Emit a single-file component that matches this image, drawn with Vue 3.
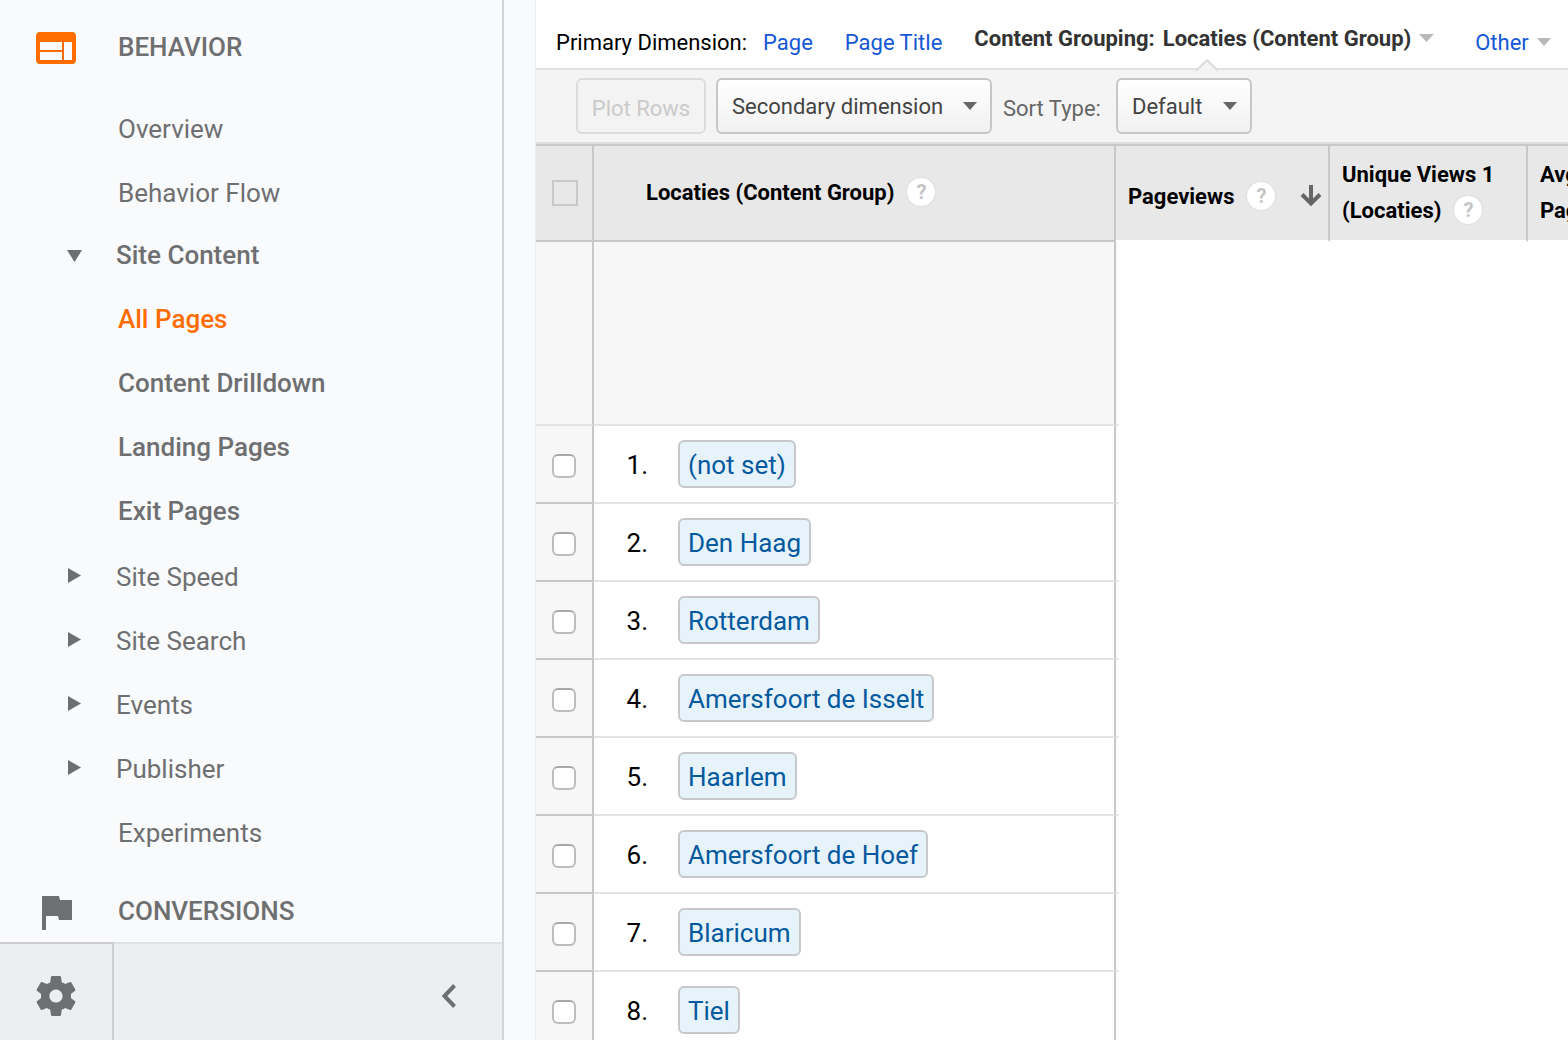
<script setup>
import { ref } from 'vue'

const before = ['Overview', 'Behavior Flow']
const siteContent = ['All Pages', 'Content Drilldown', 'Landing Pages', 'Exit Pages']
const collapsed = ['Site Speed', 'Site Search', 'Events', 'Publisher']
const locations = [
  '(not set)',
  'Den Haag',
  'Rotterdam',
  'Amersfoort de Isselt',
  'Haarlem',
  'Amersfoort de Hoef',
  'Blaricum',
  'Tiel',
]
const active = ref('All Pages')
const selected = ref([])
</script>

<template>
  <div class="app">
    <aside class="sidebar">
      <nav class="nav" aria-label="Reports">
        <a href="#behavior" class="section first">
          <svg class="section-icon" width="40" height="34" viewBox="0 0 40 34" aria-hidden="true">
            <path
              fill="#ff6d00"
              fill-rule="evenodd"
              d="M4 2h32a4 4 0 0 1 4 4v24a4 4 0 0 1-4 4H4a4 4 0 0 1-4-4V6a4 4 0 0 1 4-4zM4 12v8h22v-8zM4 22v8h22v-8zM28 12v18h8V12z"
            />
          </svg>
          BEHAVIOR
        </a>

        <a v-for="item in before" :key="item" href="#" class="item">{{ item }}</a>

        <a href="#site-content" class="item group open">
          <svg class="marker" width="16" height="14" viewBox="0 0 16 14" aria-hidden="true">
            <path fill="#6e6f71" d="M1 2h15L8.500 14z" />
          </svg>
          Site Content
        </a>
        <div class="children">
          <a
            v-for="item in siteContent"
            :key="item"
            href="#"
            class="item strong"
            :class="{ active: item === active }"
            @click.prevent="active = item"
          >{{ item }}</a>
        </div>

        <a v-for="item in collapsed" :key="item" href="#" class="item group">
          <svg class="marker" width="16" height="18" viewBox="0 0 16 18" aria-hidden="true">
            <path fill="#6e6f71" d="M2 0v15l13-7.500z" />
          </svg>
          {{ item }}
        </a>
        <a href="#" class="item">Experiments</a>

        <a href="#conversions" class="section last">
          <svg class="section-icon" width="40" height="38" viewBox="0 0 40 38" aria-hidden="true">
            <path fill="#6e6f71" d="M6 4h17l1 4h12v20H23l-1-4H10v14H6z" />
          </svg>
          CONVERSIONS
        </a>
      </nav>

      <div class="footer">
        <button type="button" class="settings" aria-label="Admin">
          <svg width="48" height="48" viewBox="0 0 24 24" aria-hidden="true">
            <path
              fill="#6e6f71"
              d="M19.430 12.980c.04-.32.07-.64.07-.98s-.03-.66-.07-.98l2.110-1.650c.19-.15.24-.42.12-.64l-2-3.460c-.12-.22-.39-.3-.61-.22l-2.490 1c-.52-.4-1.080-.73-1.690-.98l-.38-2.650C14.460 2.180 14.250 2 14 2h-4c-.25 0-.46.18-.49.42l-.38 2.650c-.61.25-1.170.59-1.690.98l-2.490-1c-.23-.09-.49 0-.61.22l-2 3.460c-.13.22-.07.49.12.64l2.110 1.650c-.04.32-.07.65-.07.98s.03.66.07.98l-2.110 1.650c-.19.15-.24.42-.12.64l2 3.460c.12.22.39.3.61.22l2.490-1c.52.4 1.080.73 1.690.98l.38 2.650c.03.24.24.42.49.42h4c.25 0 .46-.18.49-.42l.38-2.650c.61-.25 1.170-.59 1.690-.98l2.490 1c.23.09.49 0 .61-.22l2-3.460c.12-.22.07-.49-.12-.64l-2.110-1.650zM12 15.300c-1.820 0-3.300-1.480-3.300-3.300s1.480-3.300 3.300-3.300 3.300 1.480 3.300 3.300-1.480 3.300-3.300 3.300z"
            />
          </svg>
        </button>
        <button type="button" class="collapse" aria-label="Collapse menu">
          <svg width="16" height="24" viewBox="0 0 16 24" aria-hidden="true">
            <path fill="none" stroke="#6e6f71" stroke-width="4" d="M13.500 1.500L3.500 12l10 10.500" />
          </svg>
        </button>
      </div>
    </aside>

    <main class="main">
      <div class="dimensions">
        <span class="dim-label">Primary Dimension:</span>
        <a href="#" class="dim-page">Page</a>
        <a href="#" class="dim-title">Page Title</a>
        <button type="button" class="grouping">
          <span>Content Grouping:</span>
          <span class="current">Locaties (Content Group)</span>
          <svg width="16" height="8" viewBox="0 0 16 8" aria-hidden="true">
            <path fill="#b9b9b9" d="M0 0h15L7.500 8z" />
          </svg>
          <svg class="pointer" width="24" height="13" viewBox="0 0 24 13" aria-hidden="true">
            <path fill="#f4f4f4" stroke="#dcdcdc" stroke-width="2" d="M1 12L12 1l11 11" />
            <path fill="#f4f4f4" d="M3 11h18v2H3z" />
          </svg>
        </button>
        <a href="#" class="other">
          Other
          <svg width="14" height="8" viewBox="0 0 14 8" aria-hidden="true">
            <path fill="#b9b9b9" d="M0 0h14L7 8z" />
          </svg>
        </a>
      </div>

      <div class="toolbar">
        <button type="button" class="plot" disabled>Plot Rows</button>
        <span class="picker secondary">
          <select aria-label="Secondary dimension">
            <option>Secondary dimension</option>
          </select>
          <svg width="14" height="8" viewBox="0 0 14 8" aria-hidden="true">
            <path fill="#666" d="M0 0h14L7 8z" />
          </svg>
        </span>
        <label for="sort-type">Sort Type:</label>
        <span class="picker sort">
          <select id="sort-type">
            <option>Default</option>
          </select>
          <svg width="14" height="8" viewBox="0 0 14 8" aria-hidden="true">
            <path fill="#666" d="M0 0h14L7 8z" />
          </svg>
        </span>
      </div>

      <table class="data">
        <colgroup>
          <col class="col-check" />
          <col class="col-name" />
          <col class="col-views" />
          <col class="col-unique" />
          <col class="col-time" />
        </colgroup>
        <thead>
          <tr>
            <th class="check ruled"><input type="checkbox" class="all" aria-label="Select all rows" /></th>
            <th class="name ruled">
              <div class="head">
                Locaties (Content Group)
                <button type="button" class="help" aria-label="About this dimension">?</button>
              </div>
            </th>
            <th class="metric">
              <div class="head views">
                Pageviews
                <button type="button" class="help" aria-label="About pageviews">?</button>
                <svg class="sorted" width="22" height="24" viewBox="0 0 22 24" aria-hidden="true">
                  <path fill="none" stroke="#666" stroke-width="4" d="M11 0v18M2 9.500l9 9 9-9" />
                </svg>
              </div>
            </th>
            <th class="metric">
              Unique Views 1<br />
              <span class="line">(Locaties)
                <button type="button" class="help" aria-label="About unique views">?</button>
              </span>
            </th>
            <th class="metric last-metric">Avg. Time on<br />Page</th>
          </tr>
        </thead>
        <tbody>
          <tr class="summary">
            <td class="check"></td>
            <td class="name"></td>
            <td colspan="3"></td>
          </tr>
          <tr v-for="(place, i) in locations" :key="place">
            <td class="check">
              <input v-model="selected" type="checkbox" class="pick" :value="place" :aria-label="place" />
            </td>
            <td class="name">
              <div class="entry">
                <span class="rank">{{ i + 1 }}.</span>
                <a href="#" class="chip">{{ place }}</a>
              </div>
            </td>
            <td colspan="3"></td>
          </tr>
        </tbody>
      </table>
    </main>
  </div>
</template>

<style>
body {
  margin: 0;
  background: #f9fafc;
}
</style>

<style scoped>
.app {
  display: flex;
  gap: 31px;
  height: 100vh;
  overflow: hidden;
  font-family: Roboto, "Liberation Sans", sans-serif;
  font-size: 22px;
  color: #000;
}
.app *,
.app *::after {
  box-sizing: border-box;
}
a {
  text-decoration: none;
}
button,
select {
  font: inherit;
  color: inherit;
}
input {
  appearance: none;
  display: block;
  margin: 0 auto;
}
svg {
  flex: none;
  display: block;
}

/* Sidebar */
.sidebar {
  display: flex;
  flex-direction: column;
  flex: none;
  width: 504px;
  border-right: 2px solid #d3d4d6;
  color: #6e6f71;
  font-size: 26px;
}
.nav {
  flex: 1;
  min-height: 0;
  overflow: hidden;
}
.section,
.item {
  display: flex;
  align-items: center;
  height: 64px;
  padding-left: 118px;
  color: #6e6f71;
}
.section {
  gap: 42px;
  padding-left: 36px;
  font-weight: 500;
}
.first {
  margin: 15px 0 18px;
}
.last {
  margin-top: 14px;
}
.group {
  gap: 34px;
  padding-left: 66px;
}
.open {
  height: 60px;
  margin-bottom: 2px;
  font-weight: 500;
}
.children {
  margin-bottom: 2px;
}
.strong {
  font-weight: 500;
}
.active {
  color: #ff6d00;
}
.footer {
  display: flex;
  flex: none;
  height: 98px;
}
.footer button {
  display: flex;
  align-items: center;
  padding: 8px 0 0;
  border: 0 solid #cdcdcf;
  border-top-width: 2px;
  background: #eceff1;
}
.footer .settings {
  justify-content: center;
  width: 114px;
  border-right-width: 2px;
}
.footer .collapse {
  flex: 1;
  justify-content: flex-end;
  padding-right: 45px;
  border-color: #e0e1e3;
}

/* Dimension bar */
.main {
  flex: 1;
  min-width: 0;
  overflow: hidden;
  border-left: 1px solid #ebedef;
  background: #fff;
}
.dimensions {
  display: flex;
  align-items: center;
  height: 70px;
  padding: 16px 20px 0;
  border-bottom: 2px solid #e0e0e0;
  white-space: nowrap;
}
.dimensions a {
  color: #1558d6;
}
.dim-page {
  margin-left: 16px;
}
.dim-title {
  margin-left: 32px;
}
.grouping {
  position: relative;
  display: flex;
  align-items: center;
  gap: 8px;
  margin: 0 0 8px 32px;
  padding: 0;
  border: 0;
  background: none;
  color: #333;
  font-weight: 700;
}
.pointer {
  position: absolute;
  top: 33px;
  left: 221px;
}
.other {
  display: flex;
  align-items: center;
  gap: 8px;
  margin-left: 40px;
}

/* Toolbar */
.toolbar {
  display: flex;
  align-items: center;
  height: 74px;
  padding: 0 40px;
  border-bottom: 2px solid #dedede;
  background: #f4f4f4;
  white-space: nowrap;
}
.plot {
  width: 130px;
  height: 56px;
  margin-right: 10px;
  padding: 4px 0 0;
  border: 2px solid #dcdcdc;
  border-radius: 6px;
  background: #f3f3f3;
  color: #cacaca;
}
.toolbar label {
  padding: 4px 15px 0 11px;
  color: #666;
}
.picker {
  position: relative;
  display: block;
  height: 56px;
}
.picker select {
  appearance: none;
  width: 100%;
  height: 100%;
  padding: 0 14px;
  border: 2px solid #c6c6c6;
  border-radius: 6px;
  background: linear-gradient(#fff, #f1f1f1);
  color: #444;
}
.picker svg {
  position: absolute;
  top: 24px;
  right: 15px;
  pointer-events: none;
}
.secondary {
  width: 276px;
}
.sort {
  width: 136px;
}

/* Table */
.data {
  table-layout: fixed;
  width: 1192px;
  border-collapse: separate;
  border-spacing: 0;
}
.col-check {
  width: 58px;
}
.col-name {
  width: 522px;
}
.col-views {
  width: 214px;
}
.col-unique {
  width: 198px;
}
.col-time {
  width: 200px;
}
th,
td {
  padding: 0;
}
th {
  height: 98px;
  border-top: 2px solid #c8c8c8;
  border-right: 2px solid #c8c8c8;
  border-bottom: 2px solid #fff;
  background: #e8e8e8;
  line-height: 36px;
  text-align: left;
  font-weight: 700;
  white-space: nowrap;
}
th.ruled {
  border-bottom-color: #c8c8c8;
}
th.check {
  padding-left: 2px;
}
th.name {
  padding-left: 52px;
}
th.metric {
  padding-left: 12px;
}
th.last-metric {
  border-right: 0;
}
.head,
.line {
  display: flex;
  align-items: center;
  gap: 13px;
}
.views {
  padding-top: 8px;
}
.sorted {
  margin-left: 12px;
}
.help {
  width: 28px;
  height: 28px;
  margin-bottom: 2px;
  padding: 0;
  border: 0;
  border-radius: 50%;
  background: #fff;
  box-shadow: 0 0 2px #ccc;
  color: #c4c4c4;
  font-size: 20px;
  font-weight: 700;
  line-height: 28px;
}
.all {
  width: 26px;
  height: 26px;
  border: 2px solid #c8c8c8;
}
td {
  height: 78px;
}
td.check {
  padding-top: 4px;
  border-right: 2px solid #c8c8c8;
  border-bottom: 2px solid #c8c8c8;
  background: #f7f7f7;
}
td.name {
  position: relative;
  border-right: 2px solid #c8c8c8;
  border-bottom: 2px solid #e3e3e3;
}
td.name::after {
  content: "";
  position: absolute;
  top: 0;
  bottom: -2px;
  left: calc(100% + 2px);
  width: 3px;
  border-bottom: 2px solid #e6e6e6;
  background: #fbfbfb;
}
.summary td {
  height: 184px;
}
.summary .check,
.summary .name {
  border-bottom-color: #e3e3e3;
  background: #f7f7f7;
}
.pick {
  width: 24px;
  height: 24px;
  border: 2px solid #bdbdbd;
  border-top-color: #a8a8a8;
  border-radius: 6px;
  background: #fff;
}
.pick:checked,
.all:checked {
  background: #1155cc;
}
.entry {
  display: flex;
  align-items: center;
  gap: 30px;
  font-size: 26px;
}
.rank {
  width: 54px;
  padding-top: 2px;
  text-align: right;
}
.chip {
  height: 48px;
  padding: 0 8px;
  border: 2px solid #c6c8ca;
  border-radius: 6px;
  background: #e6f3fa;
  color: #05599f;
  line-height: 46px;
}
</style>
